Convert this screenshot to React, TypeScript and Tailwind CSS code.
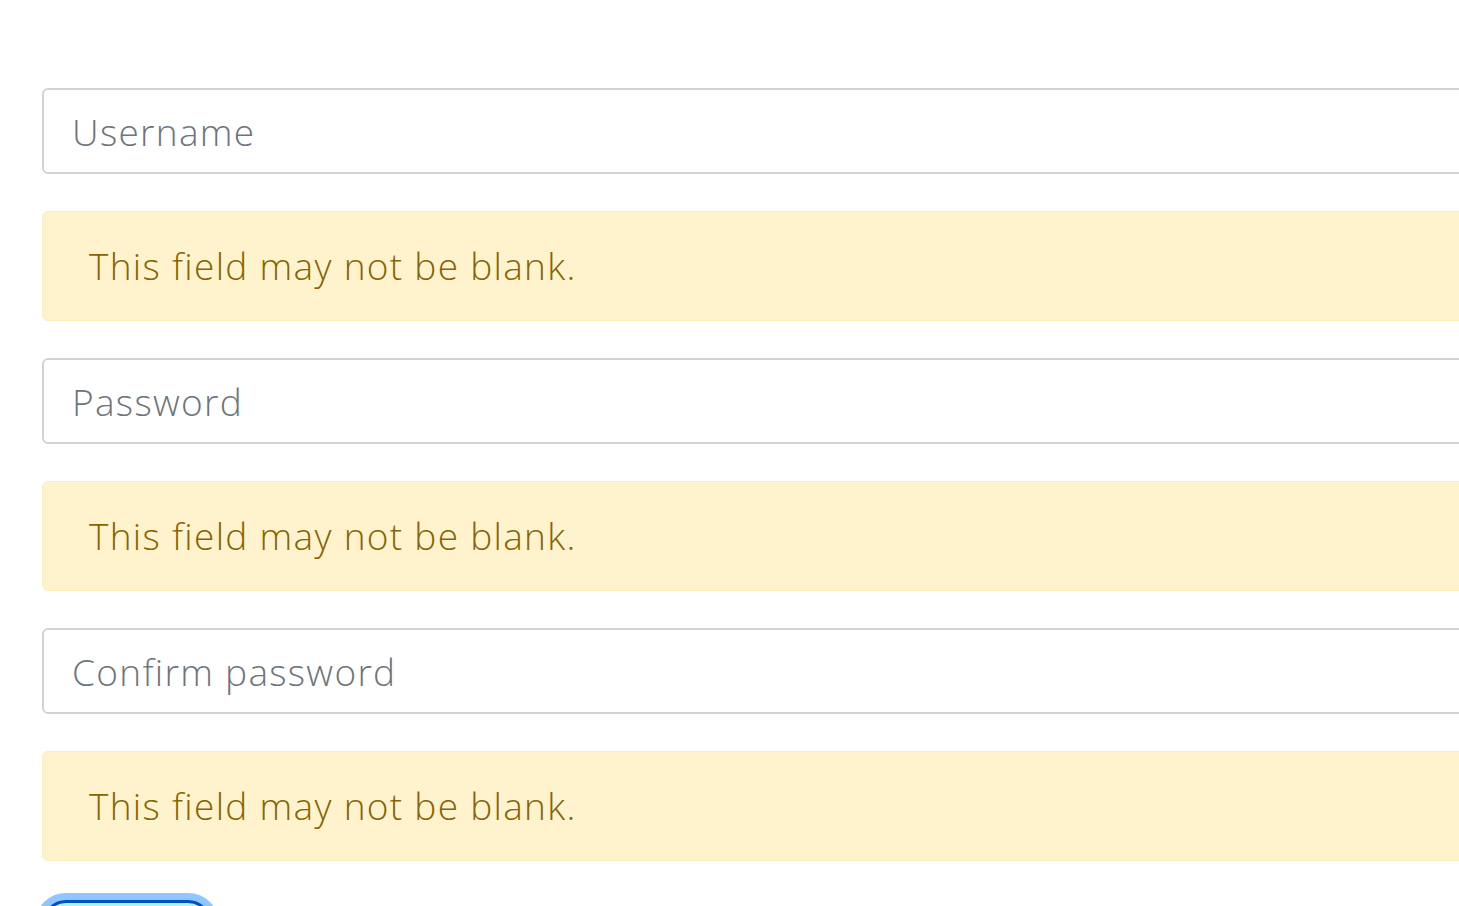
import React from "react";

const fields = [
  { name: "username", placeholder: "Username", type: "text" },
  { name: "password", placeholder: "Password", type: "password" },
  { name: "confirm", placeholder: "Confirm password", type: "password" },
];

function FieldError({ message }: { message: string }) {
  return (
    <div className="mt-[37px] mb-[37px] h-[110px] rounded-[6px] border border-[#ffeeba] bg-[#fff3cd] pl-[46px] flex items-center text-[37px] tracking-[1.3px] font-light text-[#856404]">
      {message}
    </div>
  );
}

export default function App() {
  return (
    <div
      className="h-[906px] w-full overflow-hidden bg-white"
      style={{ fontFamily: '"Open Sans", "Noto Sans", sans-serif' }}
    >
      <form className="ml-[42px] w-[1500px] pt-[88px]">
        {fields.map((f) => (
          <div key={f.name}>
            <input
              type={f.type}
              name={f.name}
              placeholder={f.placeholder}
              className="block h-[86px] w-full rounded-[6px] border-2 border-[#ced4da] bg-white px-[28px] text-[37px] tracking-[1.3px] font-light text-[#495057] placeholder:text-[#6c757d] outline-none"
            />
            <FieldError message="This field may not be blank." />
          </div>
        ))}
        <button
          type="submit"
          className="mt-[2px] h-[90px] w-[170px] rounded-[24px] border-[3px] border-[#0050c8] bg-[#b5f2f5] ring-[7px] ring-[#90c6ff] text-[36px] font-light"
        >
          Submit
        </button>
      </form>
    </div>
  );
}
